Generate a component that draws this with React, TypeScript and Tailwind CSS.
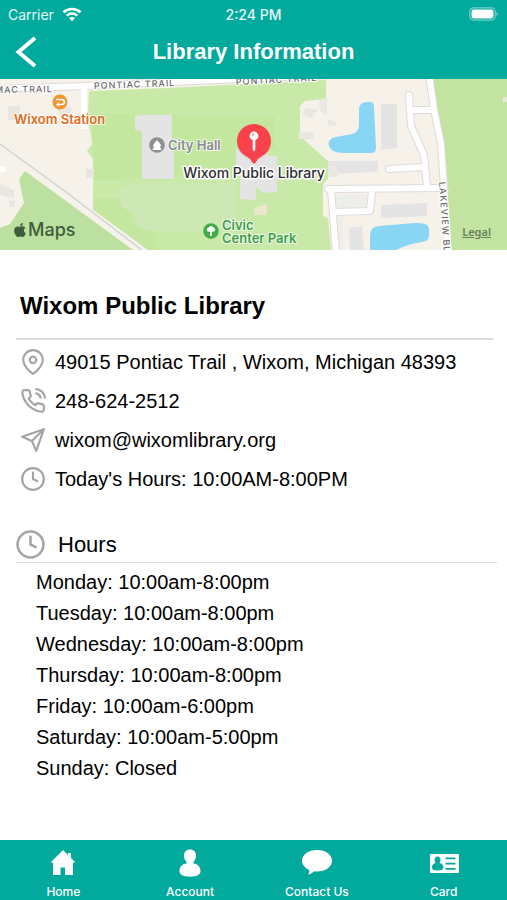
import React from "react";
import { FiClock, FiMapPin, FiPhoneCall, FiSend } from "react-icons/fi";
import { FaApple } from "react-icons/fa";

const contactRows = [
    { icon: FiMapPin, text: "49015 Pontiac Trail , Wixom, Michigan 48393" },
    { icon: FiPhoneCall, text: "248-624-2512", href: "tel:248-624-2512" },
    { icon: FiSend, text: "wixom@wixomlibrary.org", href: "mailto:wixom@wixomlibrary.org" },
    { icon: FiClock, text: "Today's Hours: 10:00AM-8:00PM" },
];

const hours = [
    "Monday: 10:00am-8:00pm",
    "Tuesday: 10:00am-8:00pm",
    "Wednesday: 10:00am-8:00pm",
    "Thursday: 10:00am-8:00pm",
    "Friday: 10:00am-6:00pm",
    "Saturday: 10:00am-5:00pm",
    "Sunday: Closed",
];

function StatusBar() {
    return (
        <div className="grid h-7 grid-cols-3 items-center px-2 font-['Inter',sans-serif] text-[14px] text-white/90">
            <div className="flex items-center gap-2">
                <span>Carrier</span>
                <svg viewBox="0 0 20 15" className="h-[15px] w-5" fill="none" stroke="white" strokeWidth="2.6" aria-hidden="true">
                    <path d="M1.5 5.2C6.2 .9 13.8 .9 18.5 5.2" />
                    <path d="M4.6 8.6c3-2.8 7.8-2.8 10.8 0" />
                    <path d="M10 14.2l-3-3.1c1.6-1.5 4.4-1.5 6 0z" fill="white" stroke="none" />
                </svg>
            </div>
            <div className="text-center font-medium">2:24 PM</div>
            <svg viewBox="0 0 30 14" className="h-[14px] w-[30px] justify-self-end" aria-hidden="true">
                <rect x=".8" y=".8" width="25.4" height="12.4" rx="4" fill="none" stroke="white" strokeOpacity=".45" strokeWidth="1.2" />
                <rect x="2.5" y="2.5" width="22" height="9" rx="2.4" fill="white" />
                <path d="M27.5 5v4c1.8-.8 1.8-3.2 0-4z" fill="white" fillOpacity=".5" />
            </svg>
        </div>
    );
}

function Header() {
    return (
        <header className="bg-[#02a99d]">
            <StatusBar />
            <div className="grid h-[51px] grid-cols-[52px_1fr_52px] items-center pb-1">
                <button type="button" aria-label="Back" className="flex h-full items-center justify-center">
                    <svg viewBox="0 0 22 32" className="h-8 w-[22px]" fill="none" stroke="white" strokeWidth="4" aria-hidden="true">
                        <path d="M20 2L3.5 16 20 30" />
                    </svg>
                </button>
                <h1 className="text-center text-[22px] font-bold text-white">Library Information</h1>
            </div>
        </header>
    );
}

function LibraryMap() {
    return (
        <section aria-label="Map" className="relative h-[171px] overflow-hidden bg-[#f6f2ea]">
            <svg viewBox="0 0 507 171" preserveAspectRatio="xMidYMid slice" className="h-full w-full font-['Inter',sans-serif]">
                {/* Parks */}
                <path d="M89 12L168 9 326 1V20L305 22 300 27V57L328 82V100L323 105V137L328 139 331 171H147L93 132V80L87 72 92 65 88 35z" fill="#c9e9a9" />
                <path d="M93 35H135V52H142V101H172V36H225L275 38V70H236V97H172L118 101V116L125 120 135 148 155 152 157 171H147L93 132z" fill="#c3e79e" />
                <path d="M118 110L142 104H236V152H155L140 150 134 136 121 127z" fill="#cde8b4" />
                <path d="M93 101H119V119H93z" fill="#cbeaa9" />
                <path d="M25 92L133 171H0V149L10 145 24 124 19 100z" fill="#bbe09f" />
                <path d="M432 0H507V171H451L447 130 444 80 438 35z" fill="#c3e4a1" />

                {/* Buildings */}
                <g fill="#e4e4e4">
                    <path d="M135 37L142 36H172V62L174 75V100H142V53L135 50z" />
                    <path d="M236 70H268V77H277V113L263 114 256 108V121L240 120V97H236z" />
                    <path d="M381 25H397V69L381 71z" />
                    <path d="M328 82H378V93L328 95z" />
                    <path d="M381 126L427 124V137L381 139z" />
                    <path d="M349 149L362 147 364 171H350z" />
                    <path d="M333 116H369L367 129H333z" fill="#eeeeea" />
                    <path d="M334 135H343V171H336z" fill="#eeeeea" />
                    <path d="M319 22L327 18V36L320 32zM318 31l-12-2-4 7 10 3zM299 53h15v7h-15zM328 40l8 3v4h-8zM329 86h9v12h-9z" fill="#eae7e0" />
                    <path d="M8 27h12v14H8zM58 28h13v7H58zM86 90h8v9h-8zM0 105l14 6v8L0 116zM9 122l6-1v7H9zM503 18h4v5h-4z" fill="#e9e5df" />
                </g>
                <path d="M254 129L267 125V136H254z" fill="#ece7cc" />

                {/* Water */}
                <g fill="#88d6f3">
                    <path d="M359 31Q359 23 367 23H370Q374 23 374 28L376 69Q376 74 370 74H343Q331 74 329 67 327 60 336 58L352 55Q359 53 359 46z" />
                    <path d="M370 171V156Q370 148 379 147L415 144Q429 143 429 150V157Q429 162 422 163 408 165 396 171z" />
                </g>

                {/* Roads */}
                <g fill="none" strokeLinecap="round" strokeLinejoin="round">
                    <g stroke="#dedbd6" strokeWidth="8">
                        <path d="M0 10L85 7 326 -4" />
                        <path d="M429 -5L434 30 441 65 444 108" />
                        <path d="M409 16L411 47 424 76 427 108M412 31H433M389 90L423 88M328 110L444 109M372 112L370 132 333 133M331 110L336 175" />
                    </g>
                    <g stroke="white" strokeWidth="6">
                        <path d="M-4 10L85 7 326 -4" />
                        <path d="M84 7V50" strokeLinecap="butt" />
                        <path d="M429 -5L434 30 441 65 444 108 449 175" />
                        <path d="M409 16L411 47 424 76 427 108M412 31H433M389 90L423 88M328 110L444 109M372 112L370 132 333 133M331 110L336 175M-2 90h5" />
                    </g>
                </g>

                {/* Railway */}
                <path d="M0 65L66 111 148 171H137L64 115z" fill="#f3f2ef" />
                <path d="M0 65L66 113 143 172" fill="none" stroke="#d1cfcb" strokeWidth="1.2" />

                {/* Street names */}
                <g fill="#6b6b6b" fontSize="9" fontWeight="500" letterSpacing="1" stroke="white" strokeWidth="2" paintOrder="stroke">
                    <text x="-5" y="14" transform="rotate(-1 0 14)">MAC TRAIL</text>
                    <text x="94" y="10" transform="rotate(-2 94 10)">PONTIAC TRAIL</text>
                    <text x="236" y="6" transform="rotate(-3 236 6)">PONTIAC TRAIL</text>
                    <text x="439" y="103" transform="rotate(86 439 103)">LAKEVIEW BLVD</text>
                </g>

                {/* Places */}
                <circle cx="60" cy="23" r="7.5" fill="#f5942f" />
                <path d="M56 20.5h5.500q3 0 3 2.500t-3 2.500H57.500" fill="none" stroke="white" strokeWidth="1.600" />
                <path d="M59 23l-3 2.500 3 2.500z" fill="white" />
                <circle cx="157" cy="66" r="7.8" fill="#8e8e93" />
                <path d="M157 60.5l.7 1.7q2.3.8 2.3 3.3h1V67h-.7v2.5h1V71h-8.6v-1.5h1V67H153v-1.5h1q0-2.5 2.3-3.3z" fill="white" />
                <circle cx="211" cy="152" r="7.8" fill="#3fae49" />
                <path d="M211 147q2 0 2.2 1.6 2 .3 2 2.1 0 2-2.2 2h-1v4h-2v-4h-1q-2.2 0-2.2-2 0-1.8 2-2.1Q209 147 211 147z" fill="white" />
                <g fontSize="13" fontWeight="600" stroke="white" strokeWidth="2" strokeOpacity=".75" paintOrder="stroke" strokeLinejoin="round">
                    <text x="14" y="45" fill="#df6d24">Wixom Station</text>
                    <text x="168" y="71" fill="#8a8a90">City Hall</text>
                    <text x="222" y="151" fill="#3a9f45">Civic</text>
                    <text x="222" y="164" fill="#3a9f45">Center Park</text>
                </g>

                {/* Library pin */}
                <circle cx="254" cy="64" r="17" opacity=".07" />
                <path d="M254 45a17 17 0 0 1 8 32q-4 2-6 6-2 3-4 0-2-4-6-6a17 17 0 0 1 8-32z" fill="#f9424c" />
                <circle cx="254" cy="57" r="4.4" fill="white" />
                <path d="M252.7 60h2.6v10.5l-1.3 2-1.3-2z" fill="white" />
                <circle cx="253" cy="55.5" r="1.3" fill="#f9a0a4" />
                <text x="254" y="99" textAnchor="middle" fontSize="14" fontWeight="500" fill="#2d2d2f" stroke="white" strokeWidth="3" paintOrder="stroke" strokeLinejoin="round">
                    Wixom Public Library
                </text>
            </svg>

            <div className="absolute bottom-2 left-3 flex items-center font-['Inter',sans-serif] text-[18px] leading-6 font-medium text-[#3d5d3c]">
                <FaApple className="size-4" aria-hidden="true" />
                Maps
            </div>
            <a href="#legal" className="absolute right-4 bottom-3 font-['Noto_Sans',sans-serif] text-[11px] leading-3 font-semibold text-[#6b8060] underline">
                Legal
            </a>
        </section>
    );
}

function Details() {
    return (
        <main className="pt-10 pr-[10px] pb-10 pl-4 text-black">
            <h2 className="pl-1 text-[24px] leading-8 font-bold">Wixom Public Library</h2>
            <ul className="mt-4 mr-1 border-t-2 border-[#d9d9d9] pt-0.5">
                {contactRows.map(({ icon: Icon, text, href }) => (
                    <li key={text} className="flex h-[39px] items-center gap-[9px] pl-1 text-[20px]">
                        <Icon className="size-[26px] shrink-0 text-[#a3a5a9]" aria-hidden="true" />
                        {href ? <a href={href}>{text}</a> : <span>{text}</span>}
                    </li>
                ))}
            </ul>

            <div className="mt-[30px] flex items-center gap-3 border-b border-[#dcdcdc] pb-px">
                <FiClock className="-ml-px size-[31px] shrink-0 text-[#a3a5a9]" aria-hidden="true" />
                <h3 className="text-[22px]">Hours</h3>
            </div>
            <ul className="mt-1 pl-5 text-[20px] leading-[31px]">
                {hours.map((day) => (
                    <li key={day}>{day}</li>
                ))}
            </ul>
        </main>
    );
}

const tabs = [
    {
        label: "Home",
        drawing: <path d="M16 2L3.5 14.5H6V27H13.5V19.5H18V27H26V14.5H28.5L24 10V5H21V7z" />,
    },
    {
        label: "Account",
        drawing: <path d="M16 1.500c4 0 6 2.700 6 6 0 3-1.200 5-2.500 6.500v1.500c4.500.5 7 3.500 7 7.500 0 4-4 5.700-10.500 5.700S5.500 27 5.500 23c0-4 2.500-7 7-7.500V14C11.200 12.500 10 10.500 10 7.500c0-3.300 2-6 6-6z" />,
    },
    {
        label: "Contact Us",
        drawing: <path d="M16 2c8.500 0 15 4.600 15 10.800S24.500 23.500 16 23.500c-1 0-2-.1-3-.2-1.200 1.600-3 2.700-6 3.200 1-1.200 1.500-2.500 1.200-4.500C4 20 1 16.700 1 12.800 1 6.600 7.500 2 16 2z" />,
    },
    {
        label: "Card",
        drawing: (
            <>
                <rect x="2" y="6" width="29" height="19" rx="1" />
                <g fill="#02a99d">
                    <path d="M9.500 8.500c2 0 3 1.300 3 3.200 0 1.500-.5 2.500-1.200 3.300 2.700.5 4 2 4 4.500 0 2.200-2 3-5.800 3s-5.500-.8-5.500-3c0-2.500 1.300-4 3.800-4.500-.8-.8-1.200-1.800-1.200-3.300 0-1.900 1-3.200 2.900-3.200z" />
                    <path d="M17.500 9.500h10v1.800h-10zM17.500 14.700h10v1.800h-10zM17.500 20h10v1.800h-10z" />
                </g>
            </>
        ),
    },
];

function TabBar() {
    return (
        <nav className="mt-auto grid grid-cols-4 bg-[#02a99d] pt-2 font-['Inter',sans-serif] text-white">
            {tabs.map(({ label, drawing }) => (
                <a key={label} href={`#${label}`} className="flex flex-col items-center gap-[5px]">
                    <svg viewBox="0 0 32 30" className="h-[30px] w-8" fill="white" aria-hidden="true">
                        {drawing}
                    </svg>
                    <span className="text-[12px] leading-[17px] font-medium">{label}</span>
                </a>
            ))}
        </nav>
    );
}

export default function App() {
    return (
        <div className="flex min-h-screen flex-col bg-white font-['Liberation_Sans',Arial,sans-serif]">
            <Header />
            <LibraryMap />
            <Details />
            <TabBar />
        </div>
    );
}
